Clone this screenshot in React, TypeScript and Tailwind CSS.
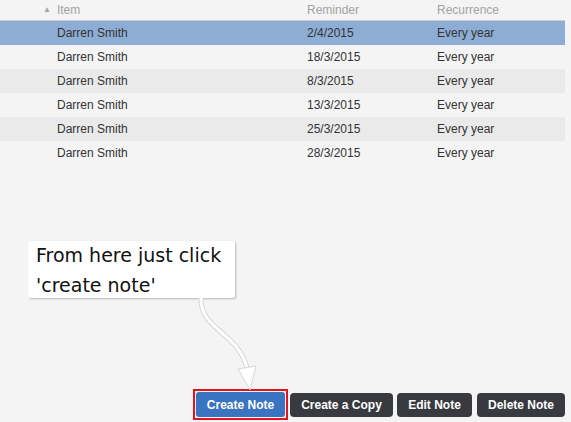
import React from 'react';

type Reminder = { id: number; item: string; date: string; recurrence: string };

const reminders: Reminder[] = [
  { id: 1, item: 'Darren Smith', date: '2/4/2015', recurrence: 'Every year' },
  { id: 2, item: 'Darren Smith', date: '18/3/2015', recurrence: 'Every year' },
  { id: 3, item: 'Darren Smith', date: '8/3/2015', recurrence: 'Every year' },
  { id: 4, item: 'Darren Smith', date: '13/3/2015', recurrence: 'Every year' },
  { id: 5, item: 'Darren Smith', date: '25/3/2015', recurrence: 'Every year' },
  { id: 6, item: 'Darren Smith', date: '28/3/2015', recurrence: 'Every year' },
];

const rowBg = (i: number) => {
  if (i === 0) return 'bg-[#8eadd4]';
  return i % 2 === 0 ? 'bg-[#eaeaea]' : 'bg-[#f4f4f4]';
};

export default function App() {
  return (
    <div
      className="relative w-[571px] h-[422px] bg-[#f4f4f4] flex flex-col text-[12px] text-[#333]"
      style={{ fontFamily: '"Liberation Sans", Arial, sans-serif' }}
    >
      {/* table */}
      <div className="w-[565px]">
        <div className="flex h-[21px] items-center border-b border-[#d0d0d0] text-[#a3a3a3]">
          <div className="w-[307px] flex items-center">
            <span className="ml-[43px] mr-[6px] text-[8px] leading-none">▲</span>
            <span>Item</span>
          </div>
          <div className="w-[130px]">Reminder</div>
          <div>Recurrence</div>
        </div>
        {reminders.map((r, i) => (
          <div key={r.id} className={`flex h-[24px] items-center ${rowBg(i)}`}>
            <div className="w-[307px] pl-[57px]">{r.item}</div>
            <div className="w-[130px]">{r.date}</div>
            <div>{r.recurrence}</div>
          </div>
        ))}
      </div>

      <div className="flex-1" />

      {/* action buttons */}
      <div className="flex items-center justify-end pr-[6px] pb-px h-[34px]">
        <div className="border-2 border-[#e3141e] p-px mr-[2px]">
          <button className="h-[25px] w-[89px] rounded-[3px] bg-[#3a74c1] text-white font-bold">
            Create Note
          </button>
        </div>
        <button className="h-[24px] w-[103px] rounded-[4px] bg-[#383a40] text-white font-bold">
          Create a Copy
        </button>
        <button className="ml-[4px] h-[24px] w-[75px] rounded-[4px] bg-[#383a40] text-white font-bold">
          Edit Note
        </button>
        <button className="ml-[5px] h-[24px] w-[88px] rounded-[4px] bg-[#383a40] text-white font-bold">
          Delete Note
        </button>
      </div>

      {/* annotation callout */}
      <div
        className="absolute left-[28px] top-[241px] w-[207px] h-[57px] bg-white rounded-[2px] shadow-[1px_1px_2px_rgba(0,0,0,0.25)] pl-[8px] text-[19px] leading-[30px] text-[#111]"
        style={{ fontFamily: '"DejaVu Sans", sans-serif' }}
      >
        <div className="-mt-[1px]">From here just click</div>
        <div>'create note'</div>
      </div>

      <svg className="absolute left-0 top-0 pointer-events-none" width="571" height="422">
        <path d="M201 298 C 200 330, 238 332, 247 368" fill="none" stroke="#d6d6d6" strokeWidth="5" />
        <path d="M201 298 C 200 330, 238 332, 247 368" fill="none" stroke="#ffffff" strokeWidth="3" />
        <polygon points="238,369 256,366 250,390" fill="#ffffff" stroke="#d6d6d6" strokeWidth="1" />
      </svg>
    </div>
  );
}
